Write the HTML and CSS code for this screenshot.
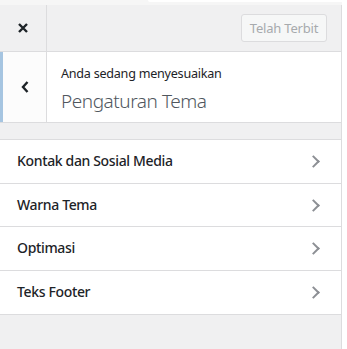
FILE: index.html
```html
<!DOCTYPE html>
<html>
	<head>
		<meta charset="UTF-8">
		<title>Customizer</title>
		<link rel="stylesheet" href="styles.css">
	</head>
	<body>
		<div class="topstrip"><div class="tab"></div></div>
		<div class="panel">
			<div class="header">
				<button class="close" aria-label="Tutup">
					<svg width="12" height="12" viewBox="0 0 12 12"><path d="M2 2 L10 10 M10 2 L2 10" stroke="#1d2327" stroke-width="2.4" fill="none"/></svg>
				</button>
				<div class="flex-spacer"></div>
				<button class="publish" disabled>Telah Terbit</button>
			</div>
			<div class="section-head">
				<button class="back" aria-label="Kembali">
					<svg width="10" height="14" viewBox="0 0 10 14"><path d="M7.5 2 L3 7 L7.5 12" stroke="#1d2327" stroke-width="2.4" fill="none"/></svg>
				</button>
				<div class="section-title">
					<span class="subtitle">Anda sedang menyesuaikan</span>
					<h3>Pengaturan Tema</h3>
				</div>
			</div>
			<ul class="sections">
				<li class="section-item">Kontak dan Sosial Media<span class="arrow"></span></li>
				<li class="section-item">Warna Tema<span class="arrow"></span></li>
				<li class="section-item">Optimasi<span class="arrow"></span></li>
				<li class="section-item">Teks Footer<span class="arrow"></span></li>
			</ul>
		</div>
	</body>
</html>
```

FILE: styles.css
```css
html, body {
	margin: 0;
	height: 100%;
	background: #fff;
}
body {
	font-family: "Noto Sans", "Open Sans", sans-serif;
	color: #1d2327;
	display: flex;
	flex-direction: column;
}
.topstrip {
	height: 5px;
	background: #f6f6f6;
	display: flex;
	justify-content: flex-end;
	width: 342px;
}
.tab {
	width: 194px;
	height: 2px;
	background: #fff;
	border-bottom-left-radius: 4px;
}
.panel {
	flex: 1;
	width: 342px;
	box-sizing: border-box;
	background: #f0f0f1;
	border-right: 1px solid #dcdcde;
}
.header {
	display: flex;
	align-items: center;
	height: 46px;
	border-bottom: 1px solid #dcdcde;
}
.flex-spacer {
	flex: 1;
}
.close {
	width: 47px;
	height: 46px;
	padding: 0;
	margin: 0;
	border: 0;
	border-right: 1px solid #dcdcde;
	background: #f0f0f1;
	display: flex;
	align-items: center;
	justify-content: center;
}
.close svg {
	width: 12px;
	height: 12px;
}
.publish {
	margin-right: 14px;
	width: 86px;
	height: 28px;
	padding: 0;
	border: 1px solid #dcdcde;
	border-radius: 3px;
	background: #f6f7f7;
	color: #a7aaad;
	font-family: inherit;
	font-size: 13px;
	letter-spacing: -0.2px;
}
.section-head {
	display: flex;
	background: #fff;
	height: 70px;
	border-bottom: 1px solid #dcdcde;
}
.back {
	width: 47px;
	padding: 0;
	margin: 0;
	border: 0;
	border-left: 3px solid #a6c5e1;
	border-right: 1px solid #dcdcde;
	background: #fcfcfc;
	display: flex;
	align-items: center;
	justify-content: center;
}
.section-title {
	padding: 12px 0 0 14px;
}
.subtitle {
	display: block;
	font-size: 12.6px;
	letter-spacing: -0.25px;
	line-height: 20px;
	color: #1d2327;
}
.section-title h3 {
	margin: 3px 0 0;
	font-size: 19px;
	letter-spacing: -0.45px;
	line-height: 28px;
	font-weight: 300;
	color: #50575e;
}
.sections {
	list-style: none;
	margin: 16px 0 0;
	padding: 0;
	border-top: 1px solid #dcdcde;
}
.section-item {
	position: relative;
	background: #fff;
	border-bottom: 1px solid #dcdcde;
	padding: 10px 10px 11px 17px;
	font-size: 14px;
	letter-spacing: -0.35px;
	line-height: 1.55;
	font-weight: 500;
}
.arrow {
	position: absolute;
	right: 23px;
	top: 17px;
	width: 7px;
	height: 7px;
	border-top: 2px solid #8c8f94;
	border-right: 2px solid #8c8f94;
	transform: rotate(45deg);
}
```
